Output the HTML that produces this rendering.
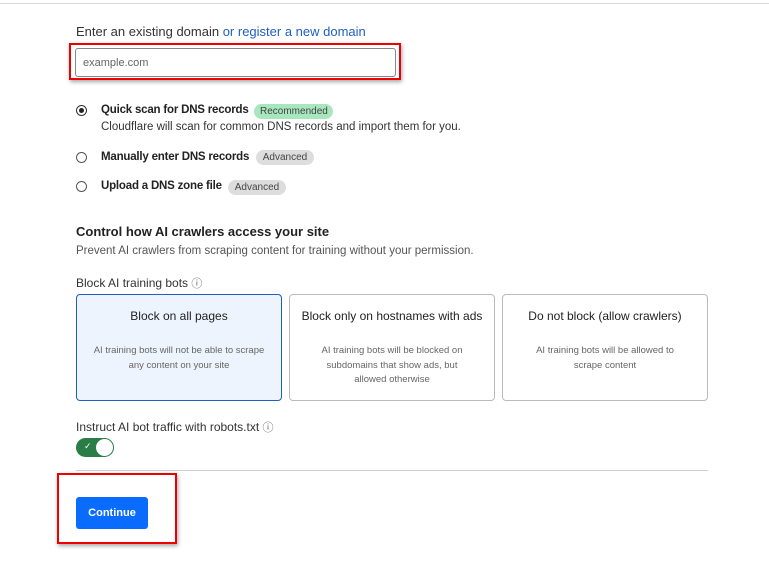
<!DOCTYPE html>
<html><head><style>
body{margin:0;width:769px;height:574px;background:#fff;font-family:"Liberation Sans",Arial,sans-serif;color:#222;position:relative;overflow:hidden}
.a{position:absolute;white-space:nowrap}
.radio{position:absolute;width:11px;height:11px;border:1px solid #555;border-radius:50%;box-sizing:border-box}
.badge{position:absolute;height:15px;border-radius:8px;font-size:10px;line-height:15px;padding:0 6px;box-sizing:border-box;color:#444;text-align:center}
.card{position:absolute;top:294px;height:107px;border:1px solid #bbb;border-radius:4px;box-sizing:border-box;text-align:center}
.card .t{font-size:12px;color:#222;margin-top:14px}
.card .d{font-size:9.5px;color:#666;line-height:14.5px;margin-top:21px;padding:0 24px}
</style></head><body>
<div class="a" style="left:0;top:3px;width:769px;height:1px;background:#d9d9d9"></div>
<div class="a" style="left:76px;top:24px;font-size:13px;color:#333">Enter an existing domain <span style="color:#1f5fbf">or register a new domain</span></div>
<div class="a" style="left:69px;top:43px;width:332px;height:37px;border:2px solid #e00;box-sizing:border-box;box-shadow:1px 2px 4px rgba(0,0,0,.35)"></div>
<div class="a" style="left:75px;top:48px;width:321px;height:29px;border:1px solid #888;border-radius:3px;box-sizing:border-box"></div>
<div class="a" style="left:83px;top:57px;font-size:11px;color:#666">example.com</div>

<div class="radio" style="left:76px;top:105px;border-color:#333"><div style="position:absolute;left:2px;top:2px;width:5px;height:5px;border-radius:50%;background:#222"></div></div>
<div class="a" style="left:101px;top:104px;font-size:11.5px;font-weight:bold;letter-spacing:-0.2px">Quick scan for DNS records</div>
<div class="badge" style="left:254px;top:104px;background:#a8e6bd;width:79px">Recommended</div>
<div class="a" style="left:101px;top:121px;font-size:11.5px;color:#333">Cloudflare will scan for common DNS records and import them for you.</div>

<div class="radio" style="left:76px;top:152px"></div>
<div class="a" style="left:101px;top:151px;font-size:11.5px;font-weight:bold;letter-spacing:-0.2px">Manually enter DNS records</div>
<div class="badge" style="left:256px;top:150px;background:#ddd;width:58px">Advanced</div>

<div class="radio" style="left:76px;top:181px"></div>
<div class="a" style="left:101px;top:180px;font-size:11.5px;font-weight:bold;letter-spacing:-0.2px">Upload a DNS zone file</div>
<div class="badge" style="left:228px;top:180px;background:#ddd;width:58px">Advanced</div>

<div class="a" style="left:76px;top:224px;font-size:13px;font-weight:bold">Control how AI crawlers access your site</div>
<div class="a" style="left:76px;top:245px;font-size:11.5px;color:#555">Prevent AI crawlers from scraping content for training without your permission.</div>
<div class="a" style="left:76px;top:275px;font-size:12px;color:#333">Block AI training bots <span style="font-size:11px;color:#666">ⓘ</span></div>

<div class="card" style="left:76px;width:206px;border-color:#1f5fbf;background:#edf4fd"><div class="t">Block on all pages</div><div class="d" style="padding:0 12px">AI training bots will not be able to scrape any content on your site</div></div>
<div class="card" style="left:289px;width:206px"><div class="t">Block only on hostnames with ads</div><div class="d">AI training bots will be blocked on subdomains that show ads, but allowed otherwise</div></div>
<div class="card" style="left:502px;width:206px"><div class="t">Do not block (allow crawlers)</div><div class="d">AI training bots will be allowed to scrape content</div></div>

<div class="a" style="left:76px;top:419px;font-size:12px;color:#333">Instruct AI bot traffic with robots.txt <span style="font-size:11px;color:#666">ⓘ</span></div>
<div class="a" style="left:76px;top:438px;width:38px;height:19px;border-radius:10px;background:#2a7d46">
<div style="position:absolute;left:8px;top:3px;font-size:9px;color:#fff">✓</div>
<div style="position:absolute;right:1px;top:1px;width:17px;height:17px;border-radius:50%;background:#fff"></div></div>
<div class="a" style="left:76px;top:470px;width:632px;height:1px;background:#d0d0d0"></div>
<div class="a" style="left:57px;top:473px;width:120px;height:71px;border:2px solid #e00;box-sizing:border-box;box-shadow:1px 2px 4px rgba(0,0,0,.35)"></div>
<div class="a" style="left:76px;top:497px;width:72px;height:32px;background:#0a6cff;border-radius:3px;color:#fff;font-size:11px;font-weight:bold;text-align:center;line-height:32px">Continue</div>
</body></html>
